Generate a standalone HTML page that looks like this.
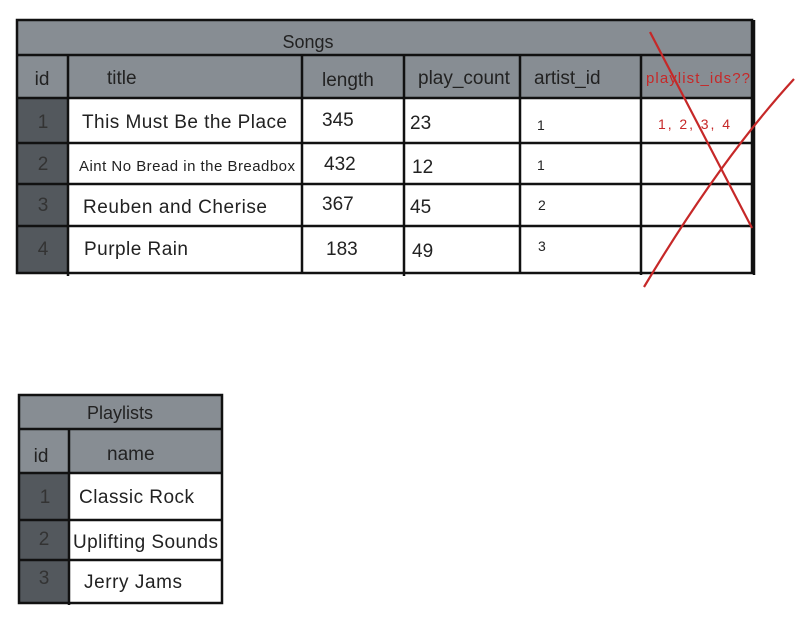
<!DOCTYPE html>
<html><head><style>
html,body{margin:0;padding:0;background:#fff;}
svg{display:block}
svg text{font-family:"Liberation Sans",Arial,sans-serif !important;}
</style></head><body>
<svg width="811" height="627" xmlns="http://www.w3.org/2000/svg" font-family="Liberation Sans, Arial, sans-serif">
<!-- Songs -->
<rect x="17" y="20" width="735" height="78" fill="#878d93"/>
<rect x="17" y="98" width="51" height="175" fill="#53585d"/>
<g stroke="#111" stroke-width="2.5" fill="none">
<rect x="17" y="20" width="735" height="253"/>
<line x1="17" y1="55" x2="752" y2="55"/>
<line x1="17" y1="98" x2="752" y2="98"/>
<line x1="17" y1="143" x2="752" y2="143"/>
<line x1="17" y1="184" x2="752" y2="184"/>
<line x1="17" y1="226" x2="752" y2="226"/>
<line x1="68" y1="55" x2="68" y2="276"/>
<line x1="302" y1="55" x2="302" y2="273"/>
<line x1="404" y1="55" x2="404" y2="276"/>
<line x1="520" y1="55" x2="520" y2="273"/>
<line x1="641" y1="55" x2="641" y2="275"/>
<line x1="754" y1="20" x2="754" y2="275"/>
</g>
<g font-size="19" fill="#222">
<text x="308" y="48" text-anchor="middle" font-size="18">Songs</text>
<text x="42" y="85" text-anchor="middle">id</text>
<text x="107" y="84">title</text>
<text x="322" y="86">length</text>
<text x="418" y="84">play_count</text>
<text x="534" y="84">artist_id</text>
<text x="43" y="128" text-anchor="middle" fill="#333">1</text>
<text x="43" y="170" text-anchor="middle" fill="#333">2</text>
<text x="43" y="211" text-anchor="middle" fill="#333">3</text>
<text x="43" y="255" text-anchor="middle" fill="#333">4</text>
<text x="82" y="128" textLength="205">This Must Be the Place</text>
<text x="79" y="171" font-size="15" textLength="216">Aint No Bread in the Breadbox</text>
<text x="83" y="213" textLength="184">Reuben and Cherise</text>
<text x="84" y="255" textLength="104">Purple Rain</text>
<text x="322" y="126">345</text>
<text x="324" y="170">432</text>
<text x="322" y="210">367</text>
<text x="326" y="255">183</text>
<text x="410" y="129">23</text>
<text x="412" y="173">12</text>
<text x="410" y="213">45</text>
<text x="412" y="257">49</text>
<text x="537" y="130" font-size="14">1</text>
<text x="537" y="170" font-size="14">1</text>
<text x="538" y="210" font-size="14">2</text>
<text x="538" y="251" font-size="14">3</text>
</g>
<text x="646" y="83" font-size="15" fill="#c62828" textLength="104">playlist_ids??</text>
<text x="658" y="129" font-size="14" fill="#c62828" textLength="72">1, 2, 3, 4</text>
<g stroke="#c62828" stroke-width="2.2" fill="none">
<path d="M650 32 L752 228"/>
<path d="M794 79 Q720 160 644 287"/>
</g>
<!-- Playlists -->
<rect x="19" y="395" width="203" height="78" fill="#878d93"/>
<rect x="19" y="473" width="50" height="130" fill="#53585d"/>
<g stroke="#111" stroke-width="2.5" fill="none">
<rect x="19" y="395" width="203" height="208"/>
<line x1="19" y1="429" x2="222" y2="429"/>
<line x1="19" y1="473" x2="222" y2="473"/>
<line x1="19" y1="520" x2="222" y2="520"/>
<line x1="19" y1="560" x2="222" y2="560"/>
<line x1="69" y1="429" x2="69" y2="605"/>
</g>
<g font-size="19" fill="#222">
<text x="120" y="419" text-anchor="middle" font-size="18">Playlists</text>
<text x="41" y="462" text-anchor="middle">id</text>
<text x="107" y="460">name</text>
<text x="45" y="503" text-anchor="middle" fill="#333">1</text>
<text x="44" y="545" text-anchor="middle" fill="#333">2</text>
<text x="44" y="584" text-anchor="middle" fill="#333">3</text>
<text x="79" y="503" textLength="115">Classic Rock</text>
<text x="73" y="548" textLength="145">Uplifting Sounds</text>
<text x="84" y="588" textLength="98">Jerry Jams</text>
</g>
</svg>
</body></html>
